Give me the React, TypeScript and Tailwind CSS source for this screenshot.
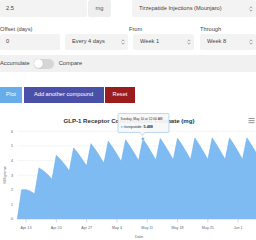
// Dose planner: compound form on top, Highcharts-style concentration chart below.

const DOSE_CURVE = [0, 2.0, 2.0, 1.9, 1.72];

// daily concentration contributed by one dose, t days after it was given
function doseContribution(t: number): number {
  if (t < 0) return 0;
  if (t < DOSE_CURVE.length) return DOSE_CURVE[t];
  return 1.72 * Math.pow(0.872, t - 4);
}

// days are counted from Apr 13; first dose on Apr 11, then every 4 days
function buildSeries() {
  const pts: { d: number; v: number }[] = [];
  for (let d = -2; d <= 56; d++) {
    let v = 0;
    for (let dose = -2; dose <= d; dose += 4) v += doseContribution(d - dose);
    pts.push({ d, v });
  }
  return pts;
}

const X0 = 26;
const DAY_W = 4.33;
const Y0 = 219;
const UNIT_H = 14.6;
const xFor = (d: number) => X0 + d * DAY_W;
const yFor = (v: number) => Y0 - v * UNIT_H;

const X_LABELS = ["Apr 13", "Apr 20", "Apr 27", "May 4", "May 11", "May 18", "May 25", "Jun 1"];

function SelectArrows() {
  return (
    <svg width="4" height="6" viewBox="0 0 4 6" className="shrink-0">
      <path d="M0.6 2.2 L2 0.8 L3.4 2.2 M0.6 3.8 L2 5.2 L3.4 3.8" fill="none" stroke="#666" strokeWidth="0.6" />
    </svg>
  );
}

function Select({ label, className }: { label: string; className: string }) {
  return (
    <div className={`flex items-center rounded-[2px] bg-[#f3f3f3] pl-[7px] pr-[3px] text-[#444] ${className}`}>
      <span className="flex-1 truncate">{label}</span>
      <SelectArrows />
    </div>
  );
}

function Chart() {
  const pts = buildSeries();
  const xL = xFor(-2);
  const line = pts.map((p) => `${xFor(p.d).toFixed(2)},${yFor(p.v).toFixed(2)}`).join(" L");
  const last = xFor(pts[pts.length - 1].d).toFixed(2);
  const area = `M${xL.toFixed(2)},${Y0} L${line} L${last},${Y0} Z`;

  return (
    <svg width="256" height="132" viewBox="0 108 256 132" className="block">
      {/* grid */}
      {[1, 2, 3, 4, 5, 6].map((v) => (
        <line key={v} x1={xL} x2={256} y1={yFor(v)} y2={yFor(v)} stroke="#e6e6e6" strokeWidth="0.4" />
      ))}

      <path d={area} fill="#7fbbf3" />
      <path d={`M${line}`} fill="none" stroke="#6aaeea" strokeWidth="0.6" />

      {/* axes */}
      <line x1={xL} x2={256} y1={Y0} y2={Y0} stroke="#9ab7d9" strokeWidth="0.5" />
      {X_LABELS.map((l, i) => {
        const x = xFor(i * 7);
        return (
          <g key={l}>
            <line x1={x} x2={x} y1={Y0} y2={Y0 + 3.5} stroke="#9ab7d9" strokeWidth="0.5" />
            <text x={x} y={229} textAnchor="middle" fontSize="3.7" fill="#666">
              {l}
            </text>
          </g>
        );
      })}
      {[0, 1, 2, 3, 4, 5, 6].map((v) => (
        <text key={v} x={13} y={yFor(v) + 1.3} textAnchor="end" fontSize="3.7" fill="#666">
          {v}
        </text>
      ))}
      <text x={139} y={237.5} textAnchor="middle" fontSize="3.8" fill="#666">
        Date
      </text>
      <text x={0} y={0} transform="translate(5.5 175) rotate(-90)" textAnchor="middle" fontSize="3.8" fill="#666">
        Milligrams
      </text>

      {/* title + export menu */}
      <text x={129} y={122.5} textAnchor="middle" fontSize="6.1" fontWeight="bold" fill="#333">
        GLP-1 Receptor Concentration Estimate (mg)
      </text>
      <path d="M248.5 118.5 H254.5 M248.5 120.6 H254.5 M248.5 122.7 H254.5" stroke="#666" strokeWidth="0.7" />

      {/* hovered point + tooltip */}
      <circle cx={xFor(27)} cy={yFor(5.488)} r="1.6" fill="#6aaeea" stroke="#fff" strokeWidth="0.5" />
      <path
        d="M119 113.5 H168 Q169 113.5 169 114.5 V131.5 Q169 132.5 168 132.5 H145 L142.5 135.5 L140 132.5 H119 Q118 132.5 118 131.5 V114.5 Q118 113.5 119 113.5 Z"
        fill="#f7f7f7"
        fillOpacity="0.92"
        stroke="#7cb5ec"
        strokeWidth="0.5"
      />
      <text x={120.5} y={119.8} fontSize="3.3" fill="#333">
        Sunday, May 10 at 12:00 AM
      </text>
      <text x={120.5} y={127.5} fontSize="3.8" fill="#333">
        <tspan fill="#7cb5ec">●</tspan>
        <tspan> tirzepatide: </tspan>
        <tspan fontWeight="bold">5.488</tspan>
      </text>
    </svg>
  );
}

export default function App() {
  return (
    <div className="w-[256px] h-[240px] overflow-hidden bg-white font-['Liberation_Sans',Arial,sans-serif] text-[5.7px] leading-none text-[#333]">
      {/* amount + compound */}
      <div className="flex h-[17px]">
        <div className="flex w-[87px] items-center rounded-[2px] bg-[#f3f3f3] pl-[6px] text-[#444]">2.5</div>
        <div className="ml-[1px] flex w-[23px] items-center justify-center rounded-[2px] bg-[#eeeeee] text-[#555]">mg</div>
        <Select label="Tirzepatide Injections (Mounjaro)" className="ml-[21px] w-[124px]" />
      </div>

      {/* labels */}
      <div className="mt-[9px] flex h-[7px] items-center text-[#444]">
        <span className="w-[129px]">Offset (days)</span>
        <span className="w-[71px]">From</span>
        <span>Through</span>
      </div>

      {/* offset / interval / range */}
      <div className="mt-[1px] flex h-[16px]">
        <div className="flex w-[60px] items-center rounded-[2px] bg-[#f3f3f3] pl-[6px] text-[#444]">0</div>
        <Select label="Every 4 days" className="ml-[5px] w-[63px]" />
        <Select label="Week 1" className="ml-[5px] w-[61px]" />
        <Select label="Week 8" className="ml-[6px] w-[56px]" />
      </div>

      {/* accumulate / compare toggle */}
      <div className="mt-[5px] flex h-[17px] items-center bg-[#f1f1f1] text-[#444]">
        <span>Accumulate</span>
        <div className="ml-[4px] flex h-[10px] w-[20px] items-center rounded-full bg-[#d6d6d6] p-[0.5px]">
          <div className="h-[9px] w-[9px] rounded-full bg-white shadow-[0_0_1px_rgba(0,0,0,0.3)]" />
        </div>
        <span className="ml-[5px]">Compare</span>
      </div>

      {/* actions */}
      <div className="mt-[15px] flex h-[16px] gap-[1.5px] text-white">
        <button type="button" className="w-[22px] bg-[#68ade9]">Plot</button>
        <button type="button" className="w-[80px] bg-[#4a50a8]">Add another compound</button>
        <button type="button" className="w-[30px] bg-[#9b1c1c]">Reset</button>
      </div>

      <div className="mt-[5px]">
        <Chart />
      </div>
    </div>
  );
}
